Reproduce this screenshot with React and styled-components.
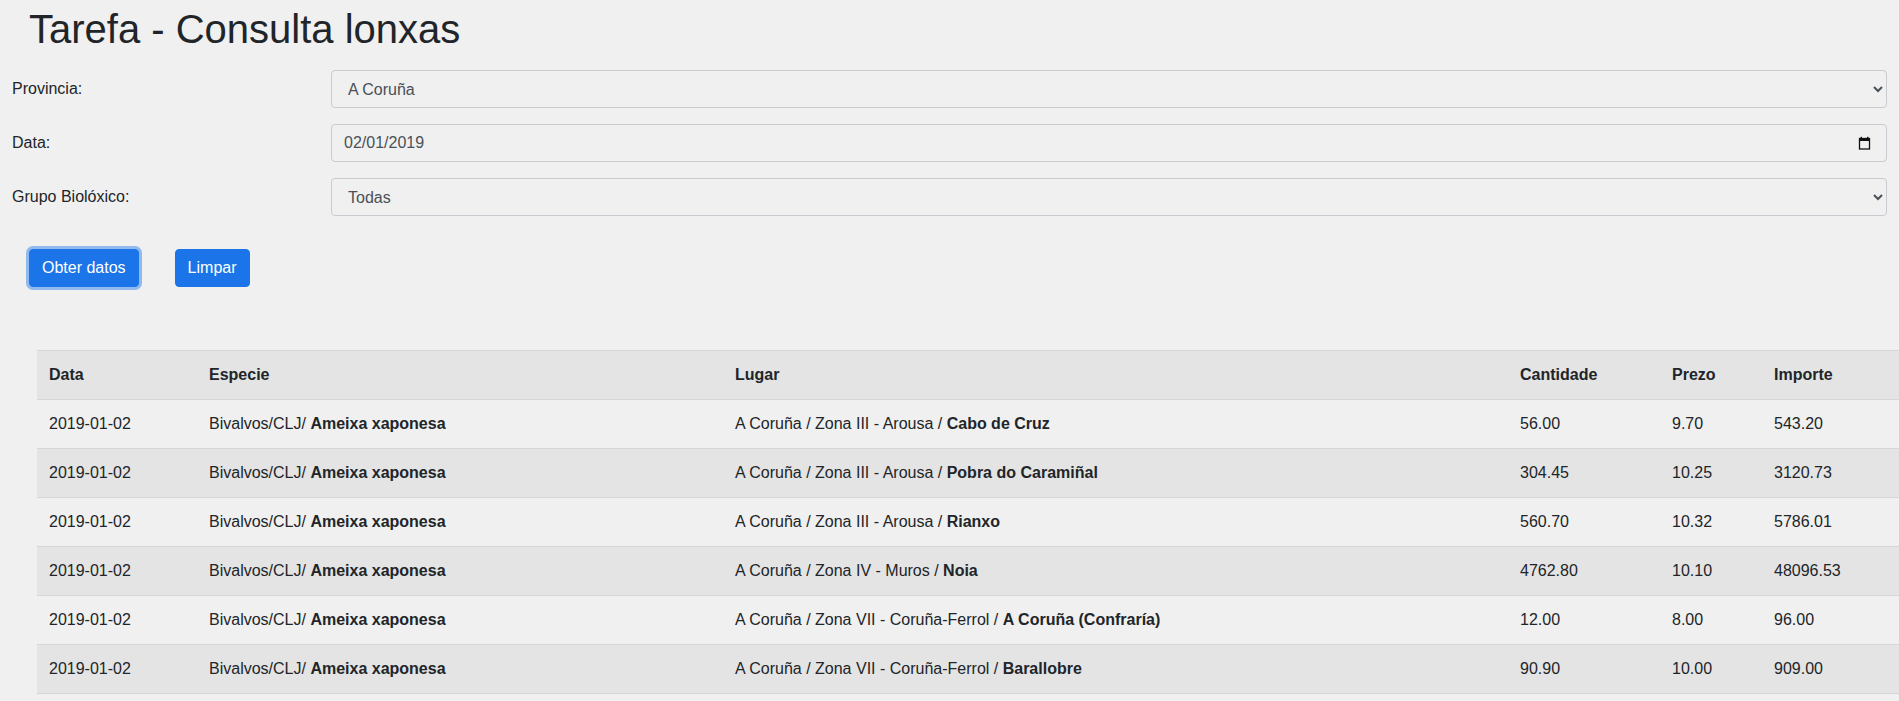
import React from "react";
import styled, { createGlobalStyle } from "styled-components";

const GlobalStyle = createGlobalStyle`
  html, body {
    margin: 0;
    padding: 0;
    background: #f0f0f0;
    overflow: hidden;
  }
  body {
    font-family: "Liberation Sans", Arial, sans-serif;
    font-size: 16px;
    line-height: 1.5;
    color: #212529;
  }
  * { box-sizing: border-box; }
`;

const Page = styled.main`
  display: flex;
  flex-direction: column;
`;

const Title = styled.h1`
  margin: 5px 0 0 29px;
  font-size: 40px;
  line-height: 48px;
  font-weight: 400;
  color: #212529;
`;

const Form = styled.form`
  display: grid;
  grid-template-columns: 319px 1fr;
  row-gap: 16px;
  margin-top: 17px;
`;

const Label = styled.label`
  display: flex;
  align-items: center;
  padding: 0 12px;
  font-size: 16px;
  line-height: 24px;
`;

const Field = styled.div`
  padding: 0 12px;
`;

const Select = styled.select`
  display: block;
  width: 100%;
  height: 38px;
  padding: 6px 12px;
  font-family: "Liberation Sans", Arial, sans-serif;
  font-size: 16px;
  line-height: 24px;
  color: #495057;
  background-color: #f0f0f0;
  border: 1px solid #c8cbd0;
  border-radius: 4px;
  outline: none;
`;

const DateBox = styled.div`
  display: flex;
  align-items: center;
  justify-content: space-between;
  height: 38px;
  padding: 0 15px 0 12px;
  font-size: 16px;
  line-height: 24px;
  color: #495057;
  background-color: #f0f0f0;
  border: 1px solid #c8cbd0;
  border-radius: 4px;
`;

const Buttons = styled.div`
  display: flex;
  gap: 36px;
  margin: 33px 0 0 29px;
`;

const Button = styled.button`
  height: 38px;
  padding: 6px 12px;
  font-family: "Liberation Sans", Arial, sans-serif;
  font-size: 16px;
  line-height: 24px;
  color: #ffffff;
  background: #1b75e8;
  border: 1px solid #1b75e8;
  border-radius: 4px;
  box-shadow: ${(p) => (p.$focused ? "0 0 0 3px rgba(27,117,232,0.45)" : "none")};
  cursor: pointer;
`;

const Table = styled.table`
  margin: 63px 0 0 37px;
  width: calc(100% - 37px);
  table-layout: fixed;
  border-collapse: collapse;
  font-size: 16px;
  line-height: 24px;
`;

const HeadCell = styled.th`
  width: ${(p) => (p.$w ? `${p.$w}px` : "auto")};
  padding: 12px;
  text-align: left;
  font-weight: 700;
  background: #e4e4e4;
  border-top: 1px solid #d6d6d6;
  border-bottom: 1px solid #d6d6d6;
  white-space: nowrap;
`;

const Row = styled.tr`
  background: ${(p) => (p.$striped ? "#e4e4e4" : "#f0f0f0")};
`;

const Cell = styled.td`
  padding: 12px;
  border-bottom: 1px solid #d6d6d6;
  white-space: nowrap;
`;

const CalendarIcon = () => (
  <svg width="13" height="14" viewBox="0 0 13 14" aria-hidden="true">
    <rect x="1.5" y="2.5" width="10" height="10.5" fill="none" stroke="#111" strokeWidth="1.3" />
    <rect x="1" y="2" width="11" height="3" fill="#111" />
    <rect x="2.6" y="0.8" width="1.4" height="2" fill="#111" />
    <rect x="9" y="0.8" width="1.4" height="2" fill="#111" />
  </svg>
);

const rows = [
  ["Zona III - Arousa", "Cabo de Cruz", "56.00", "9.70", "543.20"],
  ["Zona III - Arousa", "Pobra do Caramiñal", "304.45", "10.25", "3120.73"],
  ["Zona III - Arousa", "Rianxo", "560.70", "10.32", "5786.01"],
  ["Zona IV - Muros", "Noia", "4762.80", "10.10", "48096.53"],
  ["Zona VII - Coruña-Ferrol", "A Coruña (Confraría)", "12.00", "8.00", "96.00"],
  ["Zona VII - Coruña-Ferrol", "Barallobre", "90.90", "10.00", "909.00"],
];

export default function App() {
  return (
    <Page>
      <GlobalStyle />
      <Title>Tarefa - Consulta lonxas</Title>
      <Form onSubmit={(e) => e.preventDefault()}>
        <Label htmlFor="provincia">Provincia:</Label>
        <Field>
          <Select id="provincia" defaultValue="A Coruña">
            <option>A Coruña</option>
            <option>Lugo</option>
            <option>Ourense</option>
            <option>Pontevedra</option>
          </Select>
        </Field>
        <Label>Data:</Label>
        <Field>
          <DateBox>
            <span>02/01/2019</span>
            <CalendarIcon />
          </DateBox>
        </Field>
        <Label htmlFor="grupo">Grupo Biolóxico:</Label>
        <Field>
          <Select id="grupo" defaultValue="Todas">
            <option>Todas</option>
            <option>Bivalvos</option>
            <option>Peixes</option>
          </Select>
        </Field>
      </Form>
      <Buttons>
        <Button type="button" $focused>Obter datos</Button>
        <Button type="button">Limpar</Button>
      </Buttons>
      <Table>
        <thead>
          <tr>
            <HeadCell $w={160}>Data</HeadCell>
            <HeadCell $w={526}>Especie</HeadCell>
            <HeadCell $w={785}>Lugar</HeadCell>
            <HeadCell $w={152}>Cantidade</HeadCell>
            <HeadCell $w={102}>Prezo</HeadCell>
            <HeadCell>Importe</HeadCell>
          </tr>
        </thead>
        <tbody>
          {rows.map((r, i) => (
            <Row key={i} $striped={i % 2 === 1}>
              <Cell>2019-01-02</Cell>
              <Cell>
                Bivalvos/CLJ/ <b>Ameixa xaponesa</b>
              </Cell>
              <Cell>
                A Coruña / {r[0]} / <b>{r[1]}</b>
              </Cell>
              <Cell>{r[2]}</Cell>
              <Cell>{r[3]}</Cell>
              <Cell>{r[4]}</Cell>
            </Row>
          ))}
        </tbody>
      </Table>
    </Page>
  );
}
